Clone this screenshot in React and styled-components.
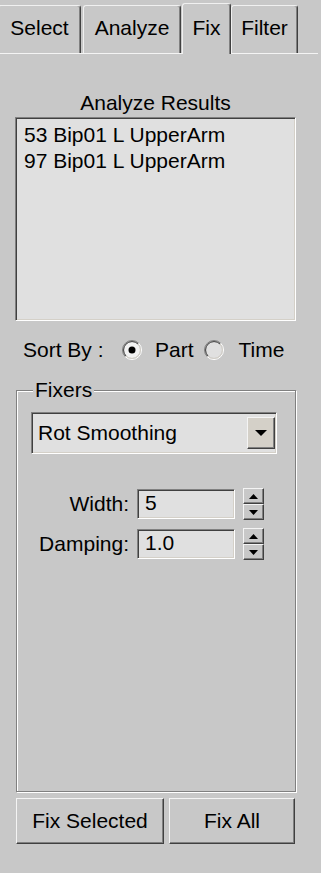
import styled, { createGlobalStyle } from 'styled-components'

const GlobalStyle = createGlobalStyle`
  html, body {
    margin: 0;
    padding: 0;
    background: #c8c8c8;
  }
  body {
    font-family: "Liberation Sans", Arial, sans-serif;
    font-size: 21px;
    color: #000;
  }
`

const FACE = '#c8c8c8'
const FIELD = '#e0e0e0'
const BTNFACE = '#d4d0c8'

function RadioDot({ checked }) {
  return (
    <svg width="20" height="20" viewBox="0 0 20 20">
      <circle cx="10" cy="10" r="8" fill={checked ? '#f2f2f2' : FIELD} />
      <path d="M3.28 16.72 A9.5 9.5 0 0 1 16.72 3.28" fill="none" stroke="#808080" strokeWidth="1" />
      <path d="M16.72 3.28 A9.5 9.5 0 0 1 3.28 16.72" fill="none" stroke="#ffffff" strokeWidth="1" />
      <path d="M3.99 16.01 A8.5 8.5 0 0 1 16.01 3.99" fill="none" stroke="#404040" strokeWidth="1" />
      <path d="M16.01 3.99 A8.5 8.5 0 0 1 3.99 16.01" fill="none" stroke={BTNFACE} strokeWidth="1" />
      {checked && <circle cx="10" cy="10" r="3.5" fill="#000" />}
    </svg>
  )
}

function Arrow({ dir, w, h }) {
  const pts = dir === 'up' ? `0,${h} ${w},${h} ${w / 2},0` : `0,0 ${w},0 ${w / 2},${h}`
  return (
    <svg width={w} height={h} viewBox={`0 0 ${w} ${h}`}>
      <polygon points={pts} fill="#000" />
    </svg>
  )
}

function Spinner() {
  return (
    <SpinBox>
      <SpinButton><Arrow dir="up" w={9} h={5} /></SpinButton>
      <SpinButton><Arrow dir="down" w={9} h={5} /></SpinButton>
    </SpinBox>
  )
}

function App() {
  return (
    <>
      <GlobalStyle />
      <Page>
        <TabBar>
          <Tab $w={83} $ml={-2}>Select</Tab>
          <Tab $w={98} $ml={2}>Analyze</Tab>
          <Tab $w={49} $ml={1} $active>Fix</Tab>
          <Tab $w={67} $ml={0}>Filter</Tab>
        </TabBar>

        <Content>
          <Title>Analyze Results</Title>
          <ListBox>
            <ListItem>53 Bip01 L UpperArm</ListItem>
            <ListItem>97 Bip01 L UpperArm</ListItem>
          </ListBox>

          <SortRow>
            <SortLabel>Sort By :</SortLabel>
            <RadioOption $gap={13}>
              <RadioDot checked />
              <span>Part</span>
            </RadioOption>
            <RadioOption $gap={15} $ml={10}>
              <RadioDot />
              <span>Time</span>
            </RadioOption>
          </SortRow>

          <Group>
            <GroupLegend>Fixers</GroupLegend>
            <GroupBody>
              <Dropdown>
                <DropText>Rot Smoothing</DropText>
                <DropButton><Arrow dir="down" w={12} h={6} /></DropButton>
              </Dropdown>

              <ParamGrid>
                <ParamLabel>Width:</ParamLabel>
                <NumberField>5</NumberField>
                <Spinner />
                <ParamLabel>Damping:</ParamLabel>
                <NumberField>1.0</NumberField>
                <Spinner />
              </ParamGrid>
            </GroupBody>
          </Group>

          <ButtonRow>
            <PushButton $w={148}>Fix Selected</PushButton>
            <PushButton $w={126}>Fix All</PushButton>
          </ButtonRow>
        </Content>
      </Page>
    </>
  )
}

const Page = styled.div`
  width: 321px;
  min-height: 873px;
  background: ${FACE};
  overflow: hidden;
`

const TabBar = styled.div`
  display: flex;
  align-items: flex-end;
  width: 318px;
  height: 53px;
  border-bottom: 1px solid #f4f4f4;
`

const Tab = styled.div`
  position: relative;
  box-sizing: border-box;
  flex: none;
  width: ${p => p.$w}px;
  margin-left: ${p => p.$ml}px;
  height: ${p => (p.$active ? 51 : 48)}px;
  margin-bottom: ${p => (p.$active ? -1 : 0)}px;
  z-index: ${p => (p.$active ? 1 : 0)};
  padding-top: ${p => (p.$active ? 12 : 10)}px;
  background: ${FACE};
  border-top: 1px solid #f0f0f0;
  border-left: 1px solid #f0f0f0;
  border-right: 1px solid #404040;
  box-shadow: inset -1px 0 0 #808080;
  border-radius: 3px 3px 0 0;
  display: flex;
  justify-content: center;
  line-height: 24px;
  white-space: nowrap;
`

const Content = styled.div`
  padding-left: 15px;
`

const Title = styled.div`
  width: 281px;
  margin-top: 37px;
  text-align: center;
  line-height: 24px;
`

const sunken = `
  border-top: 1px solid #808080;
  border-left: 1px solid #808080;
  border-right: 1px solid #ffffff;
  border-bottom: 1px solid #ffffff;
  box-shadow: inset 1px 1px 0 #404040, inset -1px -1px 0 ${BTNFACE};
`

const raised = `
  border-top: 1px solid #f4f4f4;
  border-left: 1px solid #f4f4f4;
  border-right: 1px solid #404040;
  border-bottom: 1px solid #404040;
  box-shadow: inset -1px -1px 0 #808080;
`

const ListBox = styled.div`
  box-sizing: border-box;
  width: 281px;
  height: 204px;
  margin-top: 2px;
  padding: 4px 8px;
  background: ${FIELD};
  ${sunken}
`

const ListItem = styled.div`
  line-height: 26px;
  white-space: nowrap;
`

const SortRow = styled.div`
  display: flex;
  align-items: center;
  height: 24px;
  margin-top: 17px;
  padding-left: 8px;
  line-height: 24px;
`

const SortLabel = styled.span`
  width: 99px;
  white-space: nowrap;
`

const RadioOption = styled.label`
  display: flex;
  align-items: center;
  gap: ${p => p.$gap}px;
  margin-left: ${p => p.$ml || 0}px;
  svg { display: block; }
`

const Group = styled.fieldset`
  box-sizing: border-box;
  width: 280px;
  margin: 16px 0 0 1px;
  padding: 0;
  border: 1px solid #808080;
  box-shadow: inset 1px 1px 0 #ffffff, 1px 1px 0 #ffffff;
`

const GroupLegend = styled.legend`
  margin-left: 16px;
  padding: 0 2px;
  line-height: 24px;
  background: ${FACE};
`

const GroupBody = styled.div`
  height: 389px;
  padding-top: 10px;
  box-sizing: border-box;
`

const Dropdown = styled.div`
  box-sizing: border-box;
  display: flex;
  align-items: center;
  width: 246px;
  height: 42px;
  margin-left: 14px;
  padding: 0 1px 0 6px;
  background: ${FIELD};
  ${sunken}
`

const DropText = styled.span`
  flex: 1;
  white-space: nowrap;
`

const DropButton = styled.div`
  box-sizing: border-box;
  width: 28px;
  height: 32px;
  display: flex;
  align-items: center;
  justify-content: center;
  background: ${BTNFACE};
  ${raised}
  svg { display: block; }
`

const ParamGrid = styled.div`
  display: grid;
  grid-template-columns: 112px 98px 21px;
  grid-auto-rows: 32px;
  column-gap: 8px;
  row-gap: 8px;
  align-items: center;
  margin-top: 34px;
`

const ParamLabel = styled.span`
  text-align: right;
  line-height: 24px;
  white-space: nowrap;
`

const NumberField = styled.div`
  box-sizing: border-box;
  height: 30px;
  padding-left: 7px;
  line-height: 26px;
  background: ${FIELD};
  ${sunken}
`

const SpinBox = styled.div`
  display: flex;
  flex-direction: column;
  height: 32px;
`

const SpinButton = styled.div`
  box-sizing: border-box;
  height: 16px;
  display: flex;
  align-items: center;
  justify-content: center;
  background: ${FACE};
  ${raised}
  svg { display: block; }
`

const ButtonRow = styled.div`
  display: flex;
  gap: 5px;
  margin: 6px 0 0 1px;
`

const PushButton = styled.div`
  box-sizing: border-box;
  width: ${p => p.$w}px;
  height: 46px;
  display: flex;
  align-items: center;
  justify-content: center;
  background: ${FACE};
  ${raised}
  white-space: nowrap;
`

export default App
